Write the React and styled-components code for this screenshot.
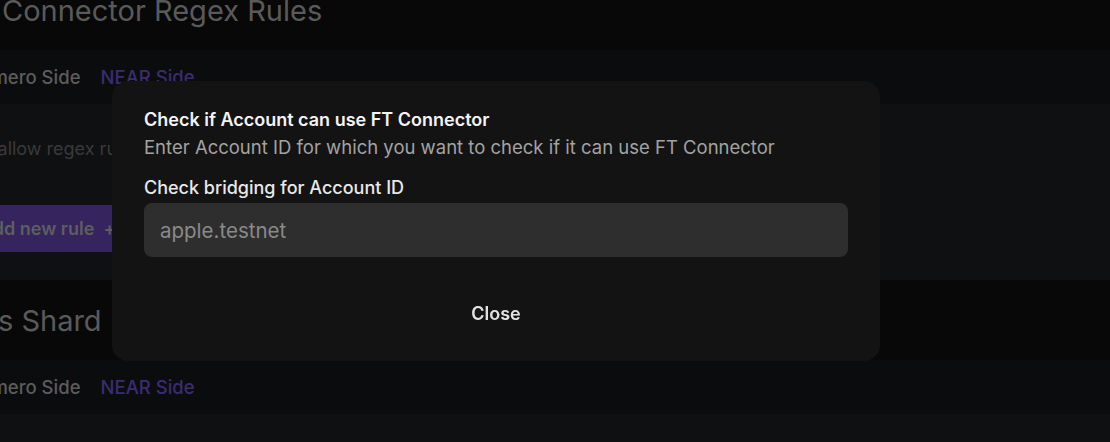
import React from "react";
import styled, { createGlobalStyle } from "styled-components";

const GlobalStyle = createGlobalStyle`
  html, body {
    margin: 0;
    padding: 0;
    background: #080808;
    overflow: hidden;
  }
  body {
    font-family: Inter, "Noto Sans", "Liberation Sans", sans-serif;
    -webkit-font-smoothing: antialiased;
  }
`;

// the page is scrolled a little, so it starts above and left of the window
const Page = styled.div`
  margin-top: -30px;
  margin-left: -42px;
  width: 1180px;
`;

const Section = styled.section`
  display: flex;
  flex-direction: column;
`;

const Heading = styled.h2`
  margin: 0;
  height: 80px;
  display: flex;
  align-items: center;
  font-size: 29px;
  font-weight: 400;
  color: #5a5a5a;
`;

const TabBar = styled.div`
  height: 54px;
  display: flex;
  align-items: center;
  gap: 20px;
  background: #0b0c0d;
`;

const Tab = styled.span`
  font-size: 18.5px;
  font-weight: 500;
  color: ${(p) => (p.$active ? "#3b2c72" : "#5c5c5c")};
`;

const Panel = styled.div`
  background: #0f1011;
  padding: 35px 0 28px;
  display: flex;
  flex-direction: column;
  align-items: flex-start;
  gap: 46px;
  min-height: ${(p) => p.$min || 0}px;
`;

const Hint = styled.p`
  margin: 0;
  font-size: 18px;
  line-height: 20px;
  color: #3a3a3a;
`;

const AddButton = styled.button`
  height: 47px;
  padding: 0 16px 0 22px;
  border: 0;
  background: #35245e;
  color: #5e5e5e;
  font-family: inherit;
  font-size: 18px;
  font-weight: 600;
  display: flex;
  align-items: center;
  gap: 9px;
`;

const Overlay = styled.div`
  position: fixed;
  inset: 0;
`;

const Modal = styled.div`
  position: absolute;
  left: 112px;
  top: 81px;
  width: 768px;
  height: 280px;
  box-sizing: border-box;
  background: #131313;
  border-radius: 16px;
  padding: 27px 32px 0;
  display: flex;
  flex-direction: column;
`;

const Title = styled.h3`
  margin: 0;
  font-size: 18px;
  line-height: 24px;
  font-weight: 600;
  color: #f4f4f4;
`;

const Subtitle = styled.p`
  margin: 3px 0 0;
  font-size: 18.5px;
  line-height: 24px;
  color: #a3a3a3;
`;

const Label = styled.label`
  margin-top: 17px;
  font-size: 18px;
  line-height: 24px;
  font-weight: 500;
  color: #e8e8e8;
`;

const Input = styled.input`
  margin-top: 3px;
  height: 54px;
  box-sizing: border-box;
  border: 0;
  border-radius: 8px;
  background: #2e2e2e;
  padding: 0 16px;
  font-family: inherit;
  font-size: 20.5px;
  color: #e8e8e8;
  outline: none;
  &::placeholder {
    color: #8a8a8a;
  }
`;

const Footer = styled.div`
  flex: 1;
  display: flex;
  align-items: center;
  justify-content: center;
  padding-top: 8px;
`;

const CloseButton = styled.button`
  border: 0;
  background: transparent;
  font-family: inherit;
  font-size: 18px;
  font-weight: 600;
  color: #e2e2e2;
  padding: 8px 16px;
`;

export default function App() {
  return (
    <>
      <GlobalStyle />
      <Page>
        <Section>
          <Heading>FT Connector Regex Rules</Heading>
          <TabBar>
            <Tab>Calimero Side</Tab>
            <Tab $active>NEAR Side</Tab>
          </TabBar>
          <Panel>
            <Hint>Add allow regex rules for account IDs</Hint>
            <AddButton>
              Add new rule <span>+</span>
            </AddButton>
          </Panel>
        </Section>
        <Section>
          <Heading>Ops Shard</Heading>
          <TabBar>
            <Tab>Calimero Side</Tab>
            <Tab $active>NEAR Side</Tab>
          </TabBar>
          <Panel $min={120} />
        </Section>
      </Page>
      <Overlay>
        <Modal role="dialog">
          <Title>Check if Account can use FT Connector</Title>
          <Subtitle>
            Enter Account ID for which you want to check if it can use FT
            Connector
          </Subtitle>
          <Label htmlFor="account">Check bridging for Account ID</Label>
          <Input id="account" placeholder="apple.testnet" />
          <Footer>
            <CloseButton>Close</CloseButton>
          </Footer>
        </Modal>
      </Overlay>
    </>
  );
}
